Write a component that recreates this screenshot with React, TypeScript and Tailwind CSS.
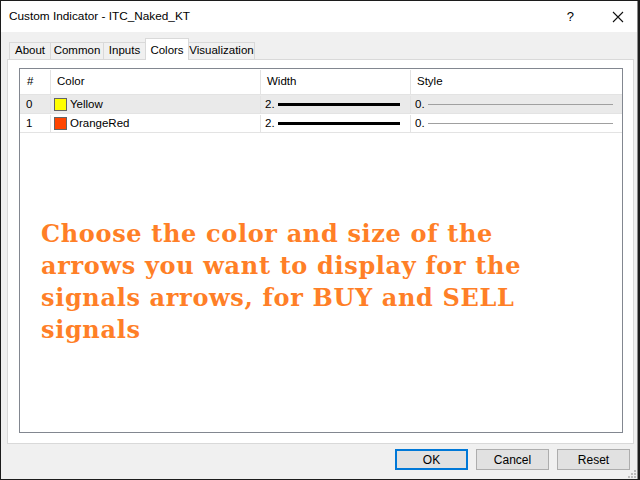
import React from "react";

const font = { fontFamily: '"Liberation Sans", Arial, sans-serif' };

function Tab({ label, w, last }: { label: string; w: string; last?: boolean }) {
  return (
    <div
      className={`h-[17px] ${w} bg-[#f0f0f0] border-l border-t border-[#d9d9d9] ${last ? "border-r" : ""} flex items-center justify-center text-[11.5px] text-black`}
    >
      {label}
    </div>
  );
}

function Row({ idx, name, color, bg }: { idx: string; name: string; color: string; bg: string }) {
  return (
    <div className={`flex h-[19px] pt-[1px] border-b border-[#e3e3e3] ${bg} text-[11.5px] text-black`}>
      <div className="w-[31px] border-r border-[#e3e3e3] flex items-center pl-[6px]">{idx}</div>
      <div className="w-[210px] border-r border-[#e3e3e3] flex items-center pl-[3px]">
        <div className="w-[13px] h-[13px] border border-[#646464]" style={{ background: color }} />
        <span className="ml-[3px]">{name}</span>
      </div>
      <div className="w-[150px] border-r border-[#e3e3e3] flex items-center pl-[4px]">
        <span>2.</span>
        <div className="ml-[3px] w-[122px] h-[3px] bg-black" />
      </div>
      <div className="flex-1 flex items-center pl-[4px]">
        <span className="text-[#000]">0.</span>
        <div className="ml-[3px] w-[185px] h-[1px] bg-[#a0a0a0]" />
      </div>
    </div>
  );
}

export default function App() {
  return (
    <div className="w-[640px] h-[480px] bg-[#1c1c1c] pt-[1px] pb-[1px] pl-[1px] overflow-hidden" style={font}>
      <div className="w-[637px] h-[478px] border-r border-[#8a8a8a] flex flex-col">
        {/* Title bar */}
        <div className="h-[31px] bg-white flex items-center pl-[8px] text-[11.8px] text-black shrink-0">
          <span>Custom Indicator - ITC_Naked_KT</span>
          <div className="flex-1" />
          <span className="text-[13px] mr-[38px]">?</span>
          <svg width="12" height="12" viewBox="0 0 12 12" className="mr-[13px]">
            <path d="M1 1 L11 11 M11 1 L1 11" stroke="#111" strokeWidth="1.1" />
          </svg>
        </div>
        {/* Body */}
        <div className="flex-1 bg-[#f0f0f0] flex flex-col pt-[6px] pl-[6px] pr-[3px] pb-[9px] relative">
          {/* Tabs */}
          <div className="flex items-end pl-[2px] h-[21px]">
            <Tab label="About" w="w-[41px]" />
            <Tab label="Common" w="w-[53px]" />
            <Tab label="Inputs" w="w-[42px]" />
            <div className="relative z-10 -mb-[1px] h-[22px] w-[44px] bg-white border-l border-r border-t border-[#d9d9d9] flex items-start justify-center pt-[3px] text-[11.5px] text-black">
              Colors
            </div>
            <div className="h-[17px] w-[66px] bg-[#f0f0f0] border-t border-r border-[#d9d9d9] flex items-center justify-center text-[11.5px] text-black">
              Visualization
            </div>
          </div>
          {/* Panel */}
          <div className="h-[385px] bg-white border border-[#d9d9d9] pt-[8px] pl-[11px] pr-[10px] pb-[10px] flex">
            <div className="flex-1 border border-[#828790] flex flex-col bg-white">
              <div className="flex h-[26px] pt-[1px] border-b border-[#e3e3e3] text-[11.5px] text-black">
                <div className="w-[31px] border-r border-[#e3e3e3] flex items-center pl-[7px]">#</div>
                <div className="w-[210px] border-r border-[#e3e3e3] flex items-center pl-[6px]">Color</div>
                <div className="w-[150px] border-r border-[#e3e3e3] flex items-center pl-[6px]">Width</div>
                <div className="flex-1 flex items-center pl-[6px]">Style</div>
              </div>
              <Row idx="0" name="Yellow" color="#ffff00" bg="bg-[#eaeaea]" />
              <Row idx="1" name="OrangeRed" color="#ff4500" bg="bg-white" />
              <div
                className="mt-[85px] pl-[21px] text-[24px] leading-[32px] font-bold text-[#ff7f27] tracking-[0.65px]"
                style={{ fontFamily: '"DejaVu Serif", "Liberation Serif", serif' }}
              >
                Choose the color and size of the
                <br />
                arrows you want to display for the
                <br />
                signals arrows, for BUY and SELL
                <br />
                signals
              </div>
            </div>
          </div>
          {/* Buttons */}
          <div className="flex justify-end mt-[5px] pr-[4px] gap-[8px]">
            <button className="w-[73px] h-[21px] bg-[#e1e1e1] border-2 border-[#0078d7] text-[12px] text-black flex items-center justify-center">
              OK
            </button>
            <button className="w-[73px] h-[21px] bg-[#e1e1e1] border border-[#adadad] text-[12px] text-black flex items-center justify-center">
              Cancel
            </button>
            <button className="w-[73px] h-[21px] bg-[#e1e1e1] border border-[#adadad] text-[12px] text-black flex items-center justify-center">
              Reset
            </button>
          </div>
          {/* Resize grip */}
          <svg width="8" height="8" viewBox="0 0 8 8" className="absolute right-[1px] bottom-[1px]">
            <rect x="6" y="0" width="2" height="2" fill="#bcbcbc" />
            <rect x="3" y="3" width="2" height="2" fill="#bcbcbc" />
            <rect x="6" y="3" width="2" height="2" fill="#bcbcbc" />
            <rect x="0" y="6" width="2" height="2" fill="#bcbcbc" />
            <rect x="3" y="6" width="2" height="2" fill="#bcbcbc" />
            <rect x="6" y="6" width="2" height="2" fill="#bcbcbc" />
          </svg>
        </div>
      </div>
    </div>
  );
}
